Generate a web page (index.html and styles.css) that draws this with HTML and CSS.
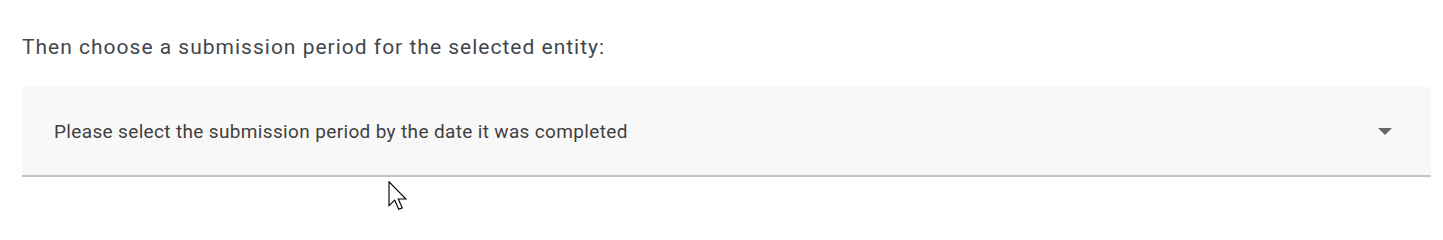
FILE: index.html
```html
<!DOCTYPE html>
<html lang="en">
<head>
<meta charset="utf-8">
<title>Submission period</title>
<link rel="stylesheet" href="styles.css">
</head>
<body>
<main class="page">
  <p class="prompt">Then choose a submission period for the selected entity:</p>
  <div class="select">
    <span class="select-text">Please select the submission period by the date it was completed</span>
    <svg class="select-arrow" width="14" height="7" viewBox="0 0 14 7" aria-hidden="true"><path d="M0 0 H14 L7 7 Z" fill="#666"/></svg>
  </div>
</main>
<svg class="cursor" width="20" height="30" viewBox="0 0 13 20" aria-hidden="true">
  <path d="M0.5 0.5 V16.5 L4.3 12.8 L7 18.9 L9.3 17.9 L6.7 12 H11.8 Z" fill="#fff" stroke="#000" stroke-width="0.75" stroke-linejoin="miter"/>
</svg>
</body>
</html>
```

FILE: styles.css
```css
html, body {
  margin: 0;
  padding: 0;
  background: #ffffff;
}

body {
  position: relative;
  width: 1443px;
  height: 231px;
  overflow: hidden;
  font-family: Roboto, "Liberation Sans", sans-serif;
}

.page {
  padding: 33px 12px 0 22px;
}

.prompt {
  margin: 0 0 26px 0;
  font-size: 21px;
  line-height: 28px;
  letter-spacing: 1px;
  color: #42474d;
  font-weight: 400;
}

.select {
  display: flex;
  align-items: center;
  justify-content: space-between;
  height: 90px;
  box-sizing: border-box;
  padding: 0 39px 0 32px;
  background: #f8f8f8;
  border-bottom: 2px solid #c4c4c4;
  width: 1409px;
}

.select-text {
  font-size: 19px;
  line-height: 24px;
  letter-spacing: 0.35px;
  color: #3f3f3f;
  font-weight: 400;
  padding-top: 2px;
}

.select-arrow {
  display: block;
}

.cursor {
  position: absolute;
  left: 388px;
  top: 181px;
}
```
